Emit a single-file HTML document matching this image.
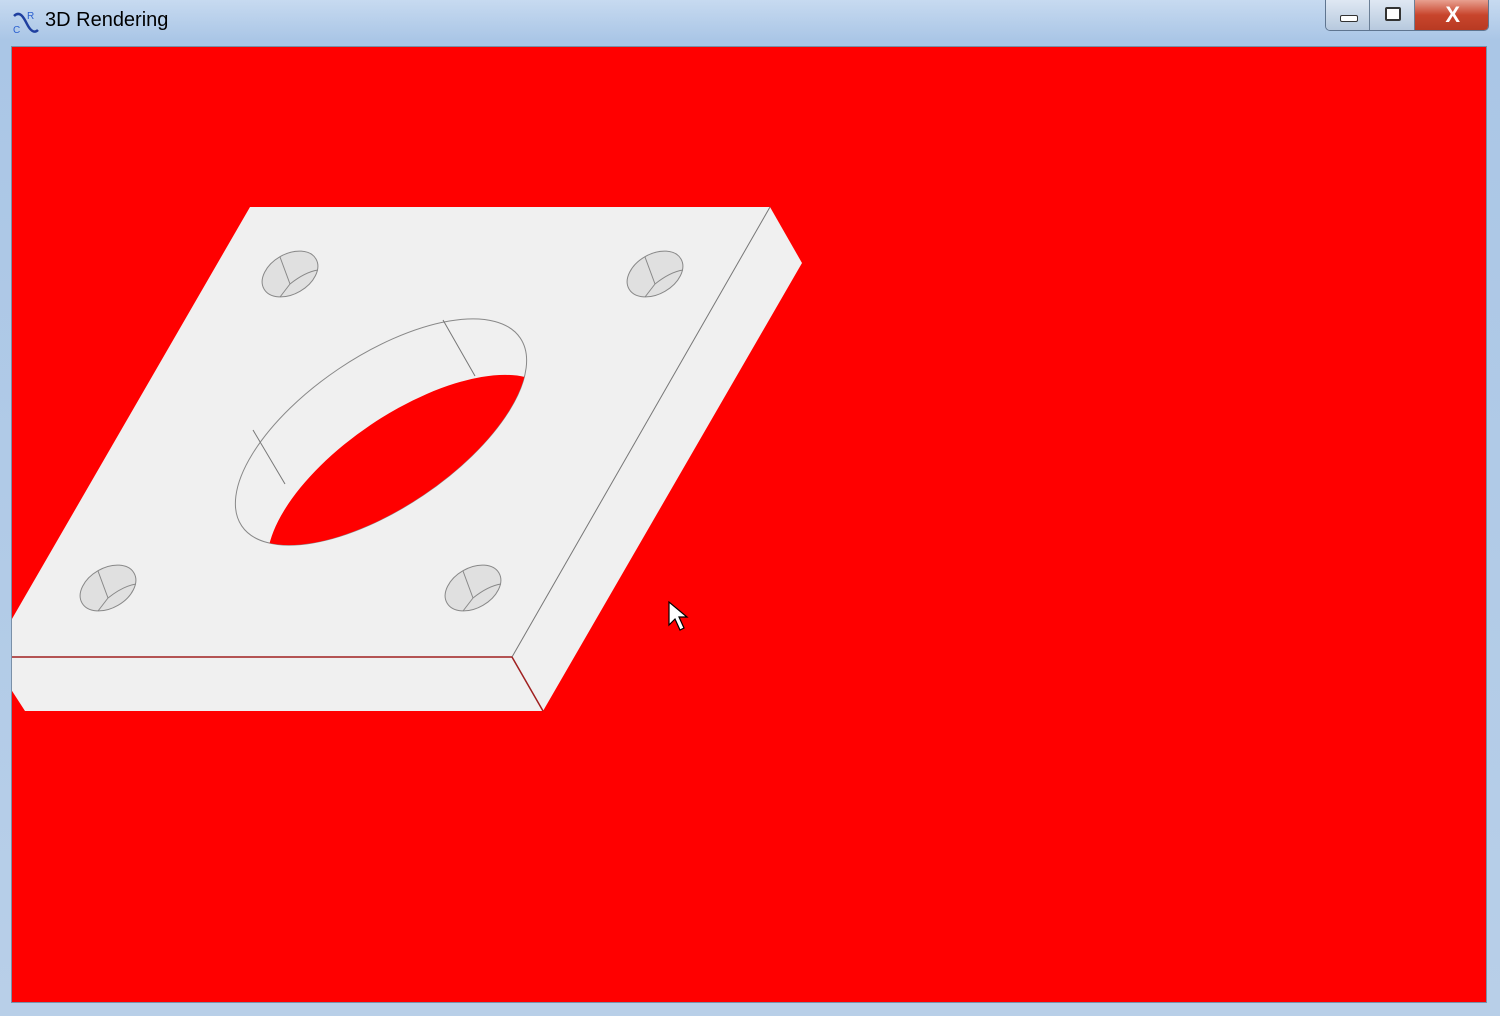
<!DOCTYPE html>
<html><head><style>
html,body{margin:0;padding:0;width:1500px;height:1016px;overflow:hidden;background:#b9d1ea}
.frame{position:absolute;left:0;top:0;width:1500px;height:1016px;background:linear-gradient(#c7daf0,#aac6e6 40px,#b8cfe8);}
.title{position:absolute;left:45px;top:9px;font:20px "Liberation Sans",sans-serif;color:#000}
.view{position:absolute;left:11px;top:46px;width:1476px;height:957px;background:#ff0000;border:1px solid #7a90a8;box-sizing:border-box}
.btns{position:absolute;left:1325px;top:0;width:162px;height:30px;border:1px solid #5f7590;border-top:none;border-radius:0 0 5px 5px;overflow:hidden;display:flex}
.b{height:30px;background:linear-gradient(#dfe8f3,#b7c9de);border-right:1px solid #6b7f96;position:relative}
.x{background:linear-gradient(#e8a090,#c8452c 50%,#b83a22);flex:1;border:none}
</style></head><body>
<div class="frame"></div>
<svg style="position:absolute;left:10px;top:8px" width="30" height="28"><path d="M4 8 C10 2,14 10,17 16 S24 26,28 22" stroke="#1f3f9f" stroke-width="2.5" fill="none"/><text x="3" y="25" font-size="10" fill="#2a5fcf" font-family="Liberation Sans">C</text><text x="17" y="11" font-size="10" fill="#2a5fcf" font-family="Liberation Sans">R</text></svg>
<div class="title">3D Rendering</div>
<div class="btns"><div class="b" style="width:43px"><div style="position:absolute;left:14px;top:15px;width:16px;height:5px;border:1.5px solid #333;border-radius:2px;background:#fff"></div></div><div class="b" style="width:44px"><div style="position:absolute;left:15px;top:7px;width:12px;height:10px;border:2px solid #333;border-radius:2px;background:#fff"></div></div><div class="b x"><div style="position:absolute;right:28px;top:2px;color:#fff;font:bold 22px 'Liberation Sans',sans-serif">X</div></div></div>
<div class="view"></div>
<svg style="position:absolute;left:0;top:0" width="1500" height="1016">
<defs><clipPath id="c"><rect x="12" y="47" width="1474" height="955"/></clipPath>
<clipPath id="h"><ellipse cx="413" cy="488" rx="168" ry="76" transform="rotate(-34 413 488)"/></clipPath></defs>
<g clip-path="url(#c)">
<polygon points="250,207 770,207 512,657 -10,657" fill="#f0f0f0"/>
<polygon points="770,207 802,263 543,711 512,657" fill="#f0f0f0"/>
<polygon points="5,657 512,657 543,711 25,711 5,680" fill="#f0f0f0"/>
<line x1="770" y1="207" x2="512" y2="657" stroke="#777" stroke-width="1"/>
<line x1="11" y1="657" x2="512" y2="657" stroke="#a02020" stroke-width="1.5"/>
<line x1="512" y1="657" x2="543" y2="711" stroke="#a02020" stroke-width="1.5"/>
<ellipse cx="381" cy="432" rx="168" ry="76" transform="rotate(-34 381 432)" fill="none" stroke="#888" stroke-width="1"/>
<g clip-path="url(#h)"><ellipse cx="381" cy="432" rx="168" ry="76" transform="rotate(-34 381 432)" fill="#ff0000"/></g>
<line x1="443" y1="320" x2="475" y2="376" stroke="#777"/>
<line x1="253" y1="430" x2="285" y2="484" stroke="#777"/>
<g fill="#e0e0e0" stroke="#888" stroke-width="1">
<ellipse cx="290" cy="274" rx="30" ry="20" transform="rotate(-30 290 274)"/>
<ellipse cx="655" cy="274" rx="30" ry="20" transform="rotate(-30 655 274)"/>
<ellipse cx="108" cy="588" rx="30" ry="20" transform="rotate(-30 108 588)"/>
<ellipse cx="473" cy="588" rx="30" ry="20" transform="rotate(-30 473 588)"/>
</g>
<g stroke="#888" fill="none">
<path d="M280 257 L290 284 M290 284 Q305 272 318 270 M290 284 L280 297"/>
<path d="M645 257 L655 284 M655 284 Q670 272 683 270 M655 284 L645 297"/>
<path d="M98 571 L108 598 M108 598 Q123 586 136 584 M108 598 L98 611"/>
<path d="M463 571 L473 598 M473 598 Q488 586 501 584 M473 598 L463 611"/>
</g>
<path d="M669 602 L669 625 L675 619 L680 630 L684 628 L679 617 L687 617 Z" fill="#fff" stroke="#000" stroke-width="1.2"/>
</g>
</svg>
</body></html>
